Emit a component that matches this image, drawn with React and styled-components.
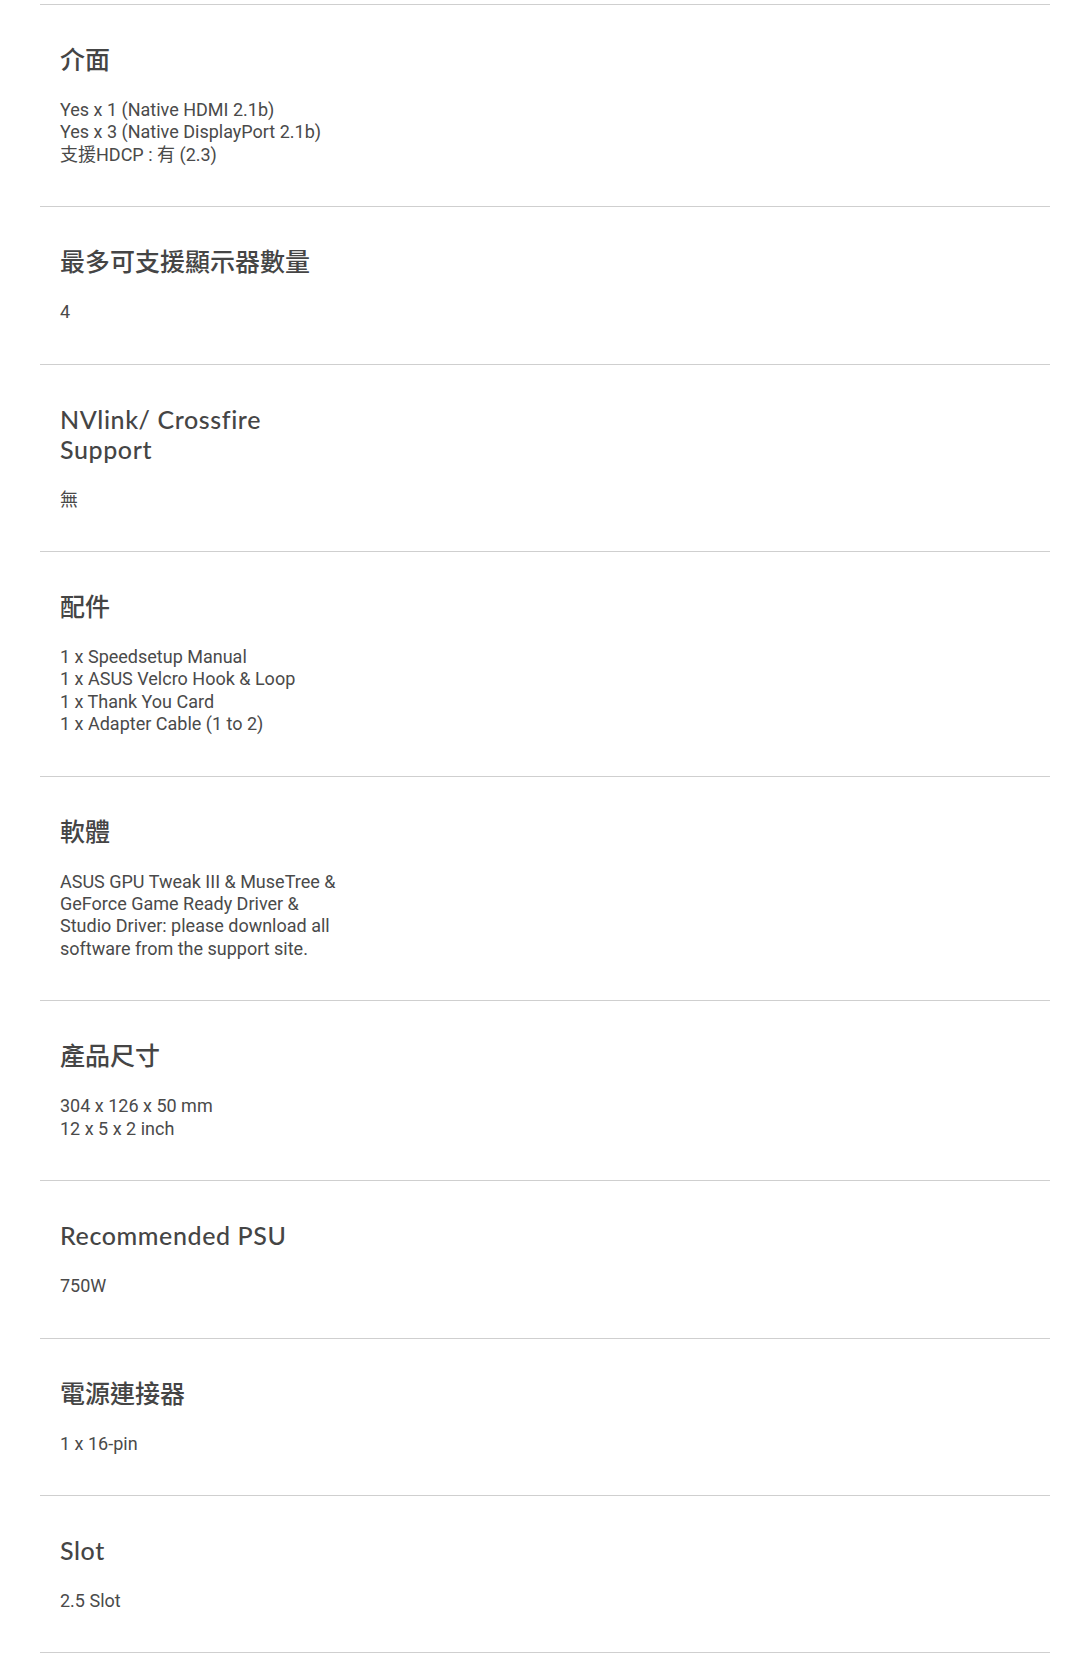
import React from 'react';
import styled, { createGlobalStyle } from 'styled-components';

const GlobalStyle = createGlobalStyle`
  body {
    margin: 0;
    background: #fff;
  }
`;

const SpecList = styled.div`
  width: 1010px;
  margin: 4px 0 0 40px;
  border-top: 1px solid #cfcfcf;
`;

const SpecRow = styled.div`
  display: flex;
  flex-direction: column;
  gap: 25px;
  padding: 39px 20px 40px;
  border-bottom: 1px solid #cfcfcf;
`;

const SpecTitle = styled.h3`
  margin: 0;
  max-width: 270px;
  font-family: Lato, "Noto Sans CJK TC", sans-serif;
  font-size: 25px;
  font-weight: 500;
  letter-spacing: ${({ $cjk }) => ($cjk ? '0' : '0.6px')};
  line-height: 30px;
  color: #454545;
`;

const SpecValue = styled.div`
  max-width: 280px;
  font-family: Roboto, "Noto Sans CJK TC", sans-serif;
  font-size: 18px;
  line-height: 22.4px;
  color: #4a4a4a;
`;

const specs = [
  {
    title: '介面',
    lines: ['Yes x 1 (Native HDMI 2.1b)', 'Yes x 3 (Native DisplayPort 2.1b)', '支援HDCP : 有 (2.3)'],
  },
  { title: '最多可支援顯示器數量', lines: ['4'] },
  { title: 'NVlink/ Crossfire Support', lines: ['無'] },
  {
    title: '配件',
    lines: [
      '1 x Speedsetup Manual',
      '1 x ASUS Velcro Hook & Loop',
      '1 x Thank You Card',
      '1 x Adapter Cable (1 to 2)',
    ],
  },
  {
    title: '軟體',
    lines: [
      'ASUS GPU Tweak III & MuseTree & GeForce Game Ready Driver & Studio Driver: please download all software from the support site.',
    ],
  },
  { title: '產品尺寸', lines: ['304 x 126 x 50 mm', '12 x 5 x 2 inch'] },
  { title: 'Recommended PSU', lines: ['750W'] },
  { title: '電源連接器', lines: ['1 x 16-pin'] },
  { title: 'Slot', lines: ['2.5 Slot'] },
];

const isCjk = (text) => /[\u3400-\u9fff]/.test(text);

export default function App() {
  return (
    <>
      <GlobalStyle />
      <SpecList>
        {specs.map((spec) => (
          <SpecRow key={spec.title}>
            <SpecTitle $cjk={isCjk(spec.title)}>{spec.title}</SpecTitle>
            <SpecValue>
              {spec.lines.map((line, i) => (
                <div key={i}>{line}</div>
              ))}
            </SpecValue>
          </SpecRow>
        ))}
      </SpecList>
    </>
  );
}
